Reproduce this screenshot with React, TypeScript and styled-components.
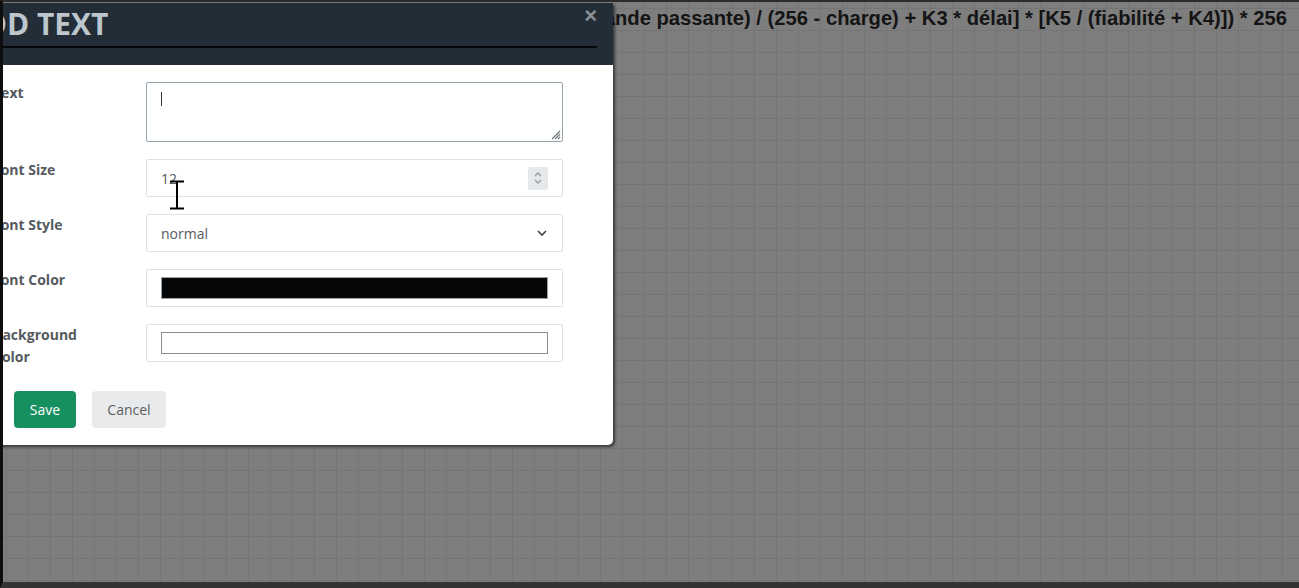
import React from "react";
import styled, { createGlobalStyle } from "styled-components";

const Global = createGlobalStyle`
  html, body { margin: 0; padding: 0; background: #7e7e7e; }
  body { font-family: "Open Sans", "Noto Sans", sans-serif; }
  * { box-sizing: border-box; }
`;

const Screen = styled.div`
  position: relative;
  width: 1299px;
  height: 588px;
  overflow: hidden;
  background-color: #7e7e7e;
  background-image:
    linear-gradient(#757575 1px, transparent 1px),
    linear-gradient(90deg, #757575 1px, transparent 1px);
  background-size: 22px 22px;
  background-position: 6px 8px;
  &::after {
    content: "";
    position: absolute;
    inset: 0;
    border-top: 2px solid #2b2b2b;
    border-left: 3px solid #0e0e0e;
    border-bottom: 6px solid #333333;
    pointer-events: none;
    z-index: 10;
  }
`;

const FormulaBar = styled.div`
  display: flex;
  justify-content: flex-end;
  align-items: center;
  height: 34px;
  padding: 2px 12px 0 0;
  white-space: nowrap;
  font-family: "Liberation Sans", Arial, sans-serif;
  font-weight: 700;
  font-size: 20.2px;
  color: #141414;
`;

const Modal = styled.div`
  position: absolute;
  left: -53px;
  top: 3px;
  width: 666px;
  background: #ffffff;
  border-radius: 0 0 5px 0;
  box-shadow: 2px 2px 3px rgba(0, 0, 0, 0.55);
  z-index: 5;
`;

const Header = styled.div`
  position: relative;
  height: 62px;
  background: #222d37;
  padding: 3px 16px 0 16px;
`;

const Title = styled.h2`
  margin: 0 0 0 1px;
  font-family: "Open Sans", sans-serif;
  font-weight: 700;
  font-size: 30px;
  line-height: 36px;
  color: #bcc6cc;
`;

const Rule = styled.hr`
  margin: 4px 0 0 0;
  border: 0;
  height: 2px;
  background: #050708;
`;

const Close = styled.span`
  position: absolute;
  right: 16px;
  top: 0px;
  font-family: "Liberation Sans", Arial, sans-serif;
  font-weight: 700;
  font-size: 22px;
  line-height: 26px;
  color: #8b9197;
`;

const Body = styled.div`
  padding: 17px 50px 17px 46px;
`;

const FormGrid = styled.div`
  display: grid;
  grid-template-columns: 120px 417px;
  column-gap: 33px;
  row-gap: 17px;
`;

const Label = styled.label`
  font-weight: 700;
  font-size: 14px;
  line-height: 22px;
  color: #555a5e;
`;

const TextAreaBox = styled.div`
  position: relative;
  height: 60px;
  border: 1px solid #93a4ad;
  border-radius: 2px;
  background: #fff;
`;

const Caret = styled.span`
  position: absolute;
  left: 14px;
  top: 9px;
  width: 1px;
  height: 14px;
  background: #333;
`;

const Grip = styled.svg`
  position: absolute;
  right: 1px;
  bottom: 1px;
`;

const Field = styled.div`
  display: flex;
  align-items: center;
  height: 38px;
  padding: 0 14px;
  border: 1px solid #dde2e5;
  border-radius: 2px;
  background: #fff;
  font-size: 14px;
  color: #555a5e;
`;

const Value = styled.span`
  flex: 1;
`;

const Spinner = styled.span`
  display: flex;
  flex-direction: column;
  align-items: center;
  justify-content: center;
  width: 20px;
  height: 23px;
  background: #e6e9ec;
  border-radius: 2px;
`;

const Swatch = styled.div<{ $color: string; $border: string }>`
  flex: 1;
  height: 22px;
  background: ${(p) => p.$color};
  border: 1px solid ${(p) => p.$border};
`;

const Actions = styled.div`
  display: flex;
  gap: 16px;
  margin: 23px 0 0 21px;
`;

const Button = styled.button<{ $primary?: boolean }>`
  height: 37px;
  padding: 0 14px;
  border: 0;
  border-radius: 4px;
  font-family: "Open Sans", sans-serif;
  font-size: 14px;
  background: ${(p) => (p.$primary ? "#17905f" : "#e9eaeb")};
  color: ${(p) => (p.$primary ? "#ffffff" : "#5a5f63")};
  min-width: ${(p) => (p.$primary ? "62px" : "74px")};
`;

const IBeam = styled.svg`
  position: absolute;
  left: 169px;
  top: 180px;
  z-index: 6;
`;

export default function App() {
  return (
    <>
      <Global />
      <Screen>
        <FormulaBar>
          Métrique = ([K1 * bande passante + (K2 * bande passante) / (256 - charge) + K3 * délai] * [K5 / (fiabilité + K4)]) * 256
        </FormulaBar>
        <Modal>
          <Header>
            <Title>ADD TEXT</Title>
            <Rule />
            <Close>×</Close>
          </Header>
          <Body>
            <FormGrid>
              <Label>Text</Label>
              <TextAreaBox>
                <Caret />
                <Grip width="12" height="12" viewBox="0 0 12 12">
                  <path d="M11 3 L3 11 M11 6 L6 11 M11 9 L9 11" stroke="#6f7a80" strokeWidth="1.2" />
                </Grip>
              </TextAreaBox>

              <Label>Font Size</Label>
              <Field>
                <Value>12</Value>
                <Spinner>
                  <svg width="10" height="18" viewBox="0 0 10 18">
                    <path d="M2 7 L5 4 L8 7" fill="none" stroke="#8e9ca4" strokeWidth="1.3" />
                    <path d="M2 11 L5 14 L8 11" fill="none" stroke="#8e9ca4" strokeWidth="1.3" />
                  </svg>
                </Spinner>
              </Field>

              <Label>Font Style</Label>
              <Field>
                <Value>normal</Value>
                <svg width="12" height="8" viewBox="0 0 12 8">
                  <path d="M2 2 L6 6 L10 2" fill="none" stroke="#3f4548" strokeWidth="1.6" />
                </svg>
              </Field>

              <Label>Font Color</Label>
              <Field>
                <Swatch $color="#050608" $border="#9aa3a8" />
              </Field>

              <Label>Background Color</Label>
              <Field>
                <Swatch $color="#ffffff" $border="#8a8f93" />
              </Field>
            </FormGrid>
            <Actions>
              <Button $primary>Save</Button>
              <Button>Cancel</Button>
            </Actions>
          </Body>
        </Modal>
        <IBeam width="16" height="30" viewBox="0 0 16 30">
          <path d="M1 1.5 H15 M8 1.5 V28.5 M1 28.5 H15" stroke="#000" strokeWidth="2" fill="none" />
        </IBeam>
      </Screen>
    </>
  );
}
